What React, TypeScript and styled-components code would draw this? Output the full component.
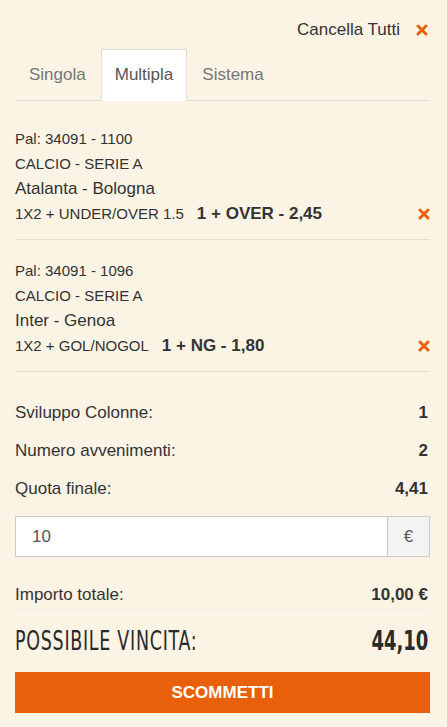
import React from 'react';
import styled, { createGlobalStyle } from 'styled-components';

const GlobalStyle = createGlobalStyle`
  html, body {
    margin: 0;
    padding: 0;
    background: #fbf3e4;
  }
  body {
    font-family: "Liberation Sans", Arial, sans-serif;
    color: #333;
  }
`;

const Slip = styled.div`
  padding: 20px 17px 14px 15px;
  background: #fbf3e4;
`;

const TopBar = styled.div`
  display: flex;
  justify-content: flex-end;
  align-items: center;
  gap: 16px;
  height: 20px;
  padding-right: 2px;
  font-size: 17px;
  color: #333;
`;

const Tabs = styled.ul`
  display: flex;
  list-style: none;
  margin: 9px 0 0;
  padding: 0;
  border-bottom: 1px solid #ddd;
`;

const Tab = styled.li<{ $active?: boolean }>`
  margin: 0 1px -1px 0;
  padding: 14px 13px 15px;
  line-height: 21px;
  font-size: 17px;
  color: ${p => (p.$active ? '#555' : '#777')};
  background: ${p => (p.$active ? '#fff' : 'transparent')};
  border: 1px solid ${p => (p.$active ? '#ddd' : 'transparent')};
  border-bottom-color: ${p => (p.$active ? '#fff' : 'transparent')};
`;

const Events = styled.div`
  margin-top: 7px;
`;

const Event = styled.div`
  padding: 18px 0 13px;
  border-bottom: 1px solid #e2ddd2;
`;

const Line = styled.div<{ $big?: boolean }>`
  line-height: 25px;
  font-size: ${p => (p.$big ? '17px' : '15px')};
  color: #333;
`;

const BetRow = styled.div`
  display: flex;
  align-items: center;
  height: 25px;
  font-size: 15px;
`;

const Outcome = styled.span`
  margin-left: 13px;
  font-size: 17px;
  font-weight: bold;
  flex: 1;
`;

const Summary = styled.div`
  padding-top: 22px;
`;

const Row = styled.div<{ $h?: number }>`
  display: flex;
  justify-content: space-between;
  align-items: center;
  height: ${p => p.$h ?? 38}px;
  font-size: 17px;
`;

const Value = styled.span`
  font-weight: bold;
  padding-right: 2px;
`;

const StakeGroup = styled.div`
  display: flex;
  height: 41px;
  margin: 8px 0 19px;
  border: 1px solid #ccc;
  box-sizing: border-box;
  background: #fff;
`;

const StakeInput = styled.input`
  flex: 1;
  min-width: 0;
  border: none;
  outline: none;
  padding: 0 16px;
  font-family: inherit;
  font-size: 17px;
  color: #555;
  background: transparent;
`;

const Addon = styled.span`
  width: 41px;
  display: flex;
  align-items: center;
  justify-content: center;
  border-left: 1px solid #ccc;
  background: #f3f3f3;
  color: #555;
  font-size: 17px;
`;

const TotalRow = styled(Row)`
  border-bottom: 1px solid #fdfaf3;
`;

const WinRow = styled(Row)`
  font-family: "Liberation Sans Narrow", "DejaVu Sans Condensed", sans-serif;
  font-size: 27px;
  color: #2a2a2a;
`;

// condensed display face is not installed; squeeze the fallback instead
const WinLabel = styled.span`
  display: inline-block;
  letter-spacing: 1px;
  transform: scaleX(0.72);
  transform-origin: left center;
  white-space: nowrap;
`;

const WinValue = styled.span`
  display: inline-block;
  font-weight: bold;
  padding-right: 2px;
  transform: scaleX(0.74);
  transform-origin: right center;
`;

const Submit = styled.button`
  display: block;
  width: 100%;
  height: 41px;
  margin-top: 7px;
  border: none;
  background: #e8610a;
  color: #fff;
  font-family: "Liberation Sans", Arial, sans-serif;
  font-size: 17px;
  font-weight: bold;
`;

const Close = () => (
  <svg width="12" height="12" viewBox="0 0 12 12" style={{ flexShrink: 0 }}>
    <path d="M2 2 L10 10 M10 2 L2 10" stroke="#e8610a" strokeWidth="3" strokeLinecap="round" />
  </svg>
);

const events = [
  { pal: 'Pal: 34091 - 1100', name: 'Atalanta - Bologna', market: '1X2 + UNDER/OVER 1.5', pick: '1 + OVER - 2,45' },
  { pal: 'Pal: 34091 - 1096', name: 'Inter - Genoa', market: '1X2 + GOL/NOGOL', pick: '1 + NG - 1,80' },
];

export default function App() {
  return (
    <>
      <GlobalStyle />
      <Slip>
        <TopBar>
          <span>Cancella Tutti</span>
          <Close />
        </TopBar>
        <Tabs>
          <Tab>Singola</Tab>
          <Tab $active>Multipla</Tab>
          <Tab>Sistema</Tab>
        </Tabs>
        <Events>
          {events.map(e => (
            <Event key={e.pal}>
              <Line>{e.pal}</Line>
              <Line>CALCIO - SERIE A</Line>
              <Line $big>{e.name}</Line>
              <BetRow>
                <span>{e.market}</span>
                <Outcome>{e.pick}</Outcome>
                <Close />
              </BetRow>
            </Event>
          ))}
        </Events>
        <Summary>
          <Row>
            <span>Sviluppo Colonne:</span>
            <Value>1</Value>
          </Row>
          <Row>
            <span>Numero avvenimenti:</span>
            <Value>2</Value>
          </Row>
          <Row>
            <span>Quota finale:</span>
            <Value>4,41</Value>
          </Row>
          <StakeGroup>
            <StakeInput defaultValue="10" />
            <Addon>€</Addon>
          </StakeGroup>
          <TotalRow>
            <span>Importo totale:</span>
            <Value>10,00 €</Value>
          </TotalRow>
          <WinRow $h={50}>
            <WinLabel>POSSIBILE VINCITA:</WinLabel>
            <WinValue>44,10</WinValue>
          </WinRow>
          <Submit>SCOMMETTI</Submit>
        </Summary>
      </Slip>
    </>
  );
}
